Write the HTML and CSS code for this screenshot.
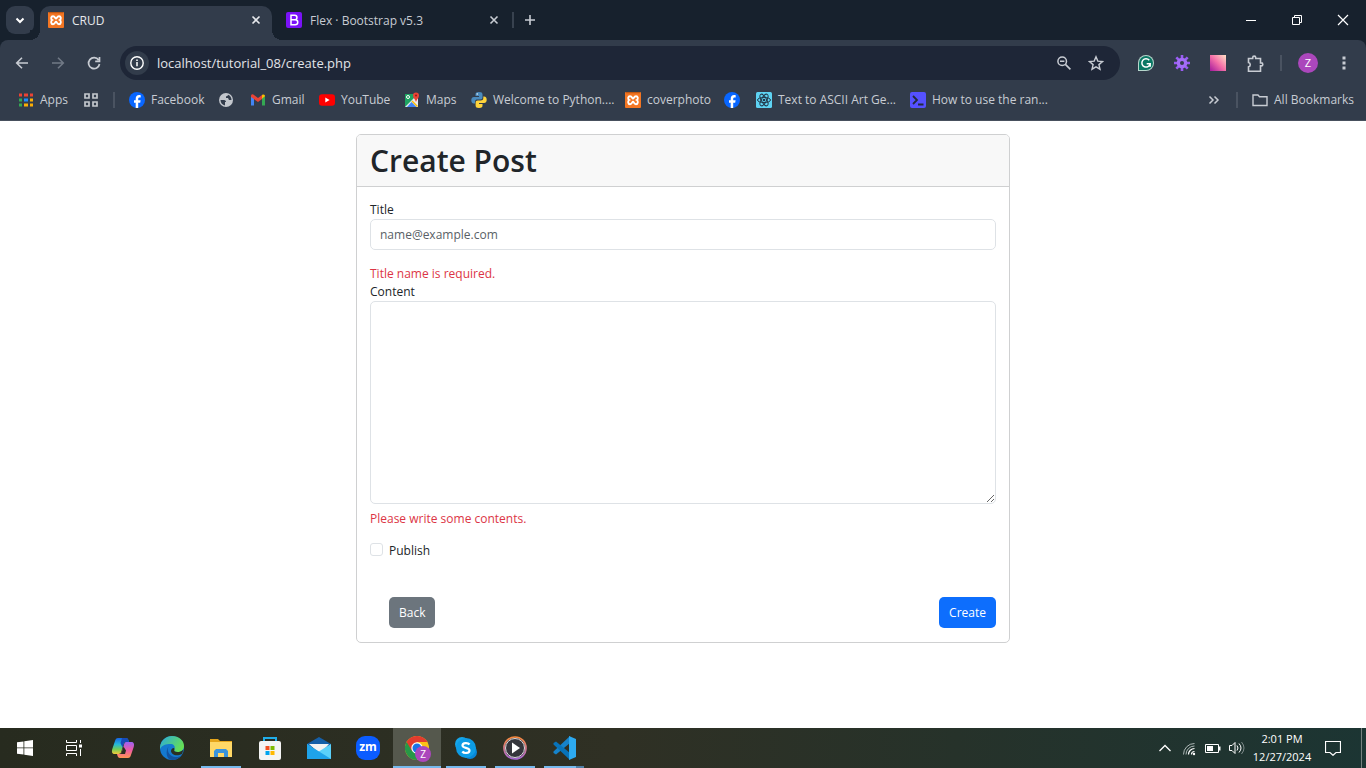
FILE: index.html
```html
<!DOCTYPE html>
<html lang="en">
<head>
<meta charset="utf-8">
<title>CRUD</title>
<link rel="stylesheet" href="styles.css">
</head>
<body>
<svg class="defs" aria-hidden="true">
  <symbol id="xampp" viewBox="0 0 16 16"><rect width="16" height="16" rx="1" fill="#f37623"/><path d="M1 .7h14" stroke="#b9530f"/><path d="M5 4.200C3 4.200 2.500 7 4.200 8 2.500 9 3 12.200 5 12.200c2.200 0 2-2.500 3-2.500s.8 2.500 3 2.500c2 0 2.500-3.200.8-4.200 1.700-1 1.200-3.800-.8-3.800-2.200 0-2 2.300-3 2.300s-.8-2.300-3-2.300z" fill="none" stroke="#fff" stroke-width="1.900"/></symbol>
  <symbol id="facebook" viewBox="0 0 16 16"><circle cx="8" cy="8" r="8" fill="#0866ff"/><path d="M6.700 16v-5.300H5V8.200h1.700V7c0-2.700 1.200-4 3.500-4 .5 0 1.100.1 1.500.2v2.200h-1.100c-1.100 0-1.400.5-1.400 1.500v1.300h2.400l-.4 2.500h-2V16z" fill="#fff"/></symbol>
  <symbol id="close" viewBox="0 0 16 16"><path d="M4.500 4.500l7 7m0-7l-7 7" stroke="currentColor" stroke-width="1.600" fill="none"/></symbol>
</svg>

<header class="browser">
  <div class="tabstrip">
    <button class="tab-search" aria-label="Search tabs"><svg width="16" height="16" viewBox="0 0 16 16"><path d="M4.500 6.500L8 10l3.500-3.500" fill="none" stroke="currentColor" stroke-width="2"/></svg></button>
    <div class="tab tab-active">
      <svg width="16" height="16"><use href="#xampp"/></svg>
      <span class="tab-title">CRUD</span>
      <button class="icon-button" aria-label="Close CRUD"><svg width="16" height="16"><use href="#close"/></svg></button>
    </div>
    <div class="tab">
      <svg width="16" height="16" viewBox="0 0 16 16"><rect width="16" height="16" rx="2" fill="#7a12f8"/><path d="M5 3.200h3.700a2.200 2.200 0 0 1 0 4.500H5zM5 7.700h4.200a2.500 2.500 0 0 1 0 5.100H5z" fill="none" stroke="#fff" stroke-width="1.500"/></svg>
      <span class="tab-title">Flex · Bootstrap v5.3</span>
      <button class="icon-button" aria-label="Close Flex"><svg width="16" height="16"><use href="#close"/></svg></button>
    </div>
    <span class="divider tab-divider"></span>
    <button class="icon-button new-tab" aria-label="New tab"><svg width="16" height="16" viewBox="0 0 16 16"><path d="M8 3v10M3 8h10" stroke="currentColor" stroke-width="1.600"/></svg></button>
    <div class="window-controls">
      <button aria-label="Minimize"><svg width="12" height="12" viewBox="0 0 12 12"><path d="M1 6.500h10" stroke="currentColor"/></svg></button>
      <button aria-label="Restore"><svg width="12" height="12" viewBox="0 0 12 12"><path d="M1.500 3.500h7v7h-7zM3.500 3.500v-2h7v7h-2" fill="none" stroke="currentColor"/></svg></button>
      <button aria-label="Close window"><svg width="12" height="12" viewBox="0 0 12 12"><path d="M1 1l10 10M11 1L1 11" stroke="currentColor" stroke-width="1.200"/></svg></button>
    </div>
  </div>

  <div class="toolbar">
    <div class="nav-buttons">
      <button class="icon-button" aria-label="Back"><svg width="16" height="16" viewBox="0 0 16 16"><path d="M14 8H3M8 2.700L2.700 8 8 13.300" fill="none" stroke="currentColor" stroke-width="1.600"/></svg></button>
      <button class="icon-button" aria-label="Forward" disabled><svg width="16" height="16" viewBox="0 0 16 16"><path d="M2 8h11M8 2.700L13.300 8 8 13.300" fill="none" stroke="currentColor" stroke-width="1.600"/></svg></button>
      <button class="icon-button" aria-label="Reload"><svg width="16" height="16" viewBox="0 0 16 16"><path d="M13.500 9A5.500 5.500 0 1 1 12.600 5M13.500 2v4.300H9.200" fill="none" stroke="currentColor" stroke-width="1.700"/></svg></button>
    </div>
    <div class="omnibox">
      <button class="site-info" aria-label="Site information"><svg width="16" height="16" viewBox="0 0 16 16"><circle cx="8" cy="8" r="6.200" fill="none" stroke="currentColor" stroke-width="1.400"/><path d="M8 7v4.300M8 4.500v1.500" stroke="currentColor" stroke-width="1.500"/></svg></button>
      <input class="address" type="text" aria-label="Address" value="localhost/tutorial_08/create.php">
      <button class="icon-button" aria-label="Zoom"><svg width="16" height="16" viewBox="0 0 16 16"><circle cx="6.200" cy="6.200" r="4.300" fill="none" stroke="currentColor" stroke-width="1.500"/><path d="M4 6.200h4.400M9.400 9.400l5 5" stroke="currentColor" stroke-width="1.600"/></svg></button>
      <button class="icon-button" aria-label="Bookmark this page"><svg width="16" height="16" viewBox="0 0 16 16"><path d="M8 1.800l1.800 4.300 4.700.4-3.600 3.100 1.100 4.600L8 11.800l-4 2.400 1.100-4.600-3.600-3.100 4.700-.4z" fill="none" stroke="currentColor" stroke-width="1.400"/></svg></button>
    </div>
    <div class="extensions">
      <button class="icon-button" aria-label="Grammarly"><svg width="16" height="16" viewBox="0 0 16 16"><path d="M0 16V8a8 8 0 1 1 8 8z" fill="#b6d6cc"/><path d="M1 15V8a7 7 0 1 1 7 7z" fill="#0a7764"/><path d="M11.300 5.200A4.200 4.200 0 1 0 12.200 8.700H8.700M12.200 8.700v3" fill="none" stroke="#fff" stroke-width="1.500"/></svg></button>
      <button class="icon-button" aria-label="Gear extension"><svg width="16" height="16" viewBox="0 0 16 16"><path d="M8 0v16M0 8h16M2.300 2.300l11.400 11.400M13.700 2.300L2.300 13.700" stroke="#9a5cf4" stroke-width="2.600"/><circle cx="8" cy="8" r="5.300" fill="#a36df7"/><circle cx="8" cy="8" r="2" fill="#323c4b"/></svg></button>
      <button class="icon-button" aria-label="Color extension"><svg width="16" height="16" viewBox="0 0 16 16"><defs><linearGradient id="pink" x1="0" y1="1" x2="1" y2="0"><stop stop-color="#a2199d"/><stop offset=".5" stop-color="#f56fa8"/><stop offset="1" stop-color="#ffe2c5"/></linearGradient></defs><rect width="16" height="16" fill="url(#pink)"/></svg></button>
      <button class="icon-button" aria-label="Extensions"><svg width="18" height="18" viewBox="0 0 18 18"><path d="M2.500 3.500h4.200V2.600a1.500 1.500 0 0 1 3 0v.9h4.800v4.400h.8a1.500 1.500 0 0 1 0 3h-.8v5.300h-12v-4.400a2.200 2.200 0 0 0 0-4.300z" fill="none" stroke="currentColor" stroke-width="1.600"/></svg></button>
      <span class="divider"></span>
      <button class="avatar" aria-label="Profile">Z</button>
      <button class="icon-button" aria-label="Menu"><svg width="16" height="16" viewBox="0 0 16 16"><path d="M6.500 1.500h3v3h-3zM6.500 6.500h3v3h-3zM6.500 11.500h3v3h-3z" fill="currentColor"/></svg></button>
    </div>
  </div>

  <nav class="bookmarks" aria-label="Bookmarks">
    <div class="bookmark-list">
      <a href="#apps"><svg width="16" height="16" viewBox="0 0 16 16"><path d="M1 3h14" stroke="#ea4335" stroke-width="3"/><path d="M1 8h4M1 13h4" stroke="#34a853" stroke-width="3"/><path d="M6 8h4" stroke="#1a8cff" stroke-width="3"/><path d="M11 8h4M6 13h9" stroke="#fbad05" stroke-width="3"/><path d="M5 1v14M11 1v14" stroke="#323c4b" stroke-width="2"/></svg>Apps</a>
      <a href="#groups" aria-label="Tab groups"><svg width="16" height="16" viewBox="0 0 16 16"><path d="M2 2h4v4H2zM10 2h4v4h-4zM2 10h4v4H2zM10 10h4v4h-4z" fill="none" stroke="#c3c7cd" stroke-width="1.700"/></svg></a>
      <span class="divider"></span>
      <a href="#facebook"><svg width="16" height="16"><use href="#facebook"/></svg>Facebook</a>
      <a href="#web" aria-label="Web page"><svg width="16" height="16" viewBox="0 0 16 16"><circle cx="8" cy="8" r="7" fill="#c3c7cd"/><path d="M2.500 8H6c1.500 0 2 1 2 2H7v3.500C4.500 13 2.500 11 2.500 8zM10 2.800C9.800 4 9 4.300 8 4.300V6h2l1 2h2.500c0-2.500-1.300-4.400-3.500-5.200z" fill="#323c4b"/></svg></a>
      <a href="#gmail"><svg width="16" height="16" viewBox="0 0 16 16"><path d="M1 13.500V4l3 2v7.500z" fill="#4285f4"/><path d="M12 13.500V6l3-2v9.500z" fill="#34a853"/><path d="M1 4.300C1 2 3 2 4 3l4 3 4-3v4L8 10 1 5z" fill="#ea4335"/><path d="M12 3c2-1.200 3 0 3 1.300l-3 2.500z" fill="#fbbc04"/></svg>Gmail</a>
      <a href="#youtube"><svg width="16" height="16" viewBox="0 0 16 16"><rect y="2.300" width="16" height="11.500" rx="3" fill="#f00"/><path d="M6.300 5.500v5l4.300-2.500z" fill="#fff"/></svg>YouTube</a>
      <a href="#maps"><svg width="16" height="16" viewBox="0 0 16 16"><rect x="1" y="2" width="13" height="13" fill="#1ea362"/><path d="M1 15L12 4l2 2v9z" fill="#e8eaed"/><path d="M3 15l4.500-5 5 5z" fill="#4285f4"/><path d="M8 9l5.500 5.500" stroke="#fbbc04" stroke-width="1.500"/><circle cx="4" cy="5" r="1.500" fill="none" stroke="#fff"/><path d="M12 10C11 7 9 6 9 3.500a3 3 0 0 1 6 0C15 6 13 7 12 10z" fill="#ea4335"/><circle cx="12" cy="3.500" r="1" fill="#8c1d18"/></svg>Maps</a>
      <a href="#python"><svg width="16" height="16" viewBox="0 0 16 16"><path d="M8 0C5 0 4.500 1 4.500 2.500V4H8v1H3C1 5 .3 6.500.3 8.300S1 11.500 3 11.500h1V9.800C4 8 5 7.500 6.500 7.500h3c1.300 0 2-.8 2-2v-3C11.500.8 10.500 0 8 0z" fill="#4b8bbe"/><path d="M8 16c3 0 3.500-1 3.500-2.500V12H8v-1h5c2 0 2.700-1.500 2.700-3.200S15 4.500 13 4.500h-.700v1.800c0 1.700-1 2.200-2.500 2.200h-3c-1.500 0-2.200.8-2.200 2v3C4.600 15.200 5.500 16 8 16z" fill="#ffd43b"/><circle cx="6.200" cy="2" r=".7" fill="#fff"/></svg>Welcome to Python....</a>
      <a href="#cover"><svg width="16" height="16"><use href="#xampp"/></svg>coverphoto</a>
      <a href="#facebook2" aria-label="Facebook"><svg width="16" height="16"><use href="#facebook"/></svg></a>
      <a href="#ascii"><svg width="16" height="16" viewBox="0 0 16 16"><rect width="16" height="16" rx="1.500" fill="#5ed3f3"/><g fill="none" stroke="#23384a"><ellipse cx="8" cy="8" rx="6.500" ry="2.600"/><ellipse cx="8" cy="8" rx="6.500" ry="2.600" transform="rotate(60 8 8)"/><ellipse cx="8" cy="8" rx="6.500" ry="2.600" transform="rotate(120 8 8)"/></g><circle cx="8" cy="8" r="1.300" fill="#23384a"/></svg>Text to ASCII Art Ge...</a>
      <a href="#random"><svg width="16" height="16" viewBox="0 0 16 16"><rect width="16" height="16" rx="2" fill="#5551ff"/><path d="M3 4l4 4-4 4M8 12.500h5.500" fill="none" stroke="#232b3c" stroke-width="1.800"/></svg>How to use the ran...</a>
    </div>
    <div class="bookmark-end">
      <button class="icon-button" aria-label="More bookmarks"><svg width="16" height="16" viewBox="0 0 16 16"><path d="M3.500 4.500L7 8l-3.500 3.500M8.500 4.500L12 8l-3.500 3.500" fill="none" stroke="currentColor" stroke-width="1.500"/></svg></button>
      <span class="divider"></span>
      <a href="#all"><svg width="16" height="16" viewBox="0 0 16 16"><path d="M1 3h5l1.500 1.700H15V13.500H1z" fill="none" stroke="currentColor" stroke-width="1.400"/></svg>All Bookmarks</a>
    </div>
  </nav>
</header>

<main class="page">
  <form class="card">
    <div class="card-header"><h1>Create Post</h1></div>
    <div class="card-body">
      <label class="form-label" for="title">Title</label>
      <input class="form-control" id="title" type="text" placeholder="name@example.com">
      <p class="error error-title">Title name is required.</p>
      <label class="form-label" for="content">Content</label>
      <textarea class="form-control" id="content" rows="10"></textarea>
      <p class="error error-content">Please write some contents.</p>
      <div class="form-check">
        <input id="publish" type="checkbox">
        <label for="publish">Publish</label>
      </div>
      <div class="actions">
        <button class="btn btn-secondary" type="button">Back</button>
        <button class="btn btn-primary" type="button">Create</button>
      </div>
    </div>
  </form>
</main>

<footer class="taskbar">
  <div class="task-list">
    <button aria-label="Start"><svg width="16" height="16" viewBox="0 0 16 16"><path d="M0 2.300l6.500-.9v6.100H0zM7.300 1.300L16 0v7.500H7.300zM0 8.300h6.500v6.300L0 13.700zM7.300 8.300H16V16l-8.700-1.300z" fill="#fff"/></svg></button>
    <button aria-label="Task view"><svg width="16" height="16" viewBox="0 0 16 16"><path d="M.5 0v2.500h10V0M.5 5.500h10v5H.5zM.5 16v-2.500h10V16M14.500 0v3M14.500 9v7" fill="none" stroke="#fff"/><path d="M13 4.500h3v3h-3z" fill="#fff"/></svg></button>
    <button aria-label="Copilot"><svg width="24" height="24" viewBox="0 0 24 24"><defs><linearGradient id="cp1" x1="0" y1="0" x2="0" y2="1"><stop stop-color="#1665e8"/><stop offset=".4" stop-color="#25b8d8"/><stop offset=".7" stop-color="#70cc57"/><stop offset="1" stop-color="#f4c83a"/></linearGradient><linearGradient id="cp2" x1="0" y1="0" x2="0" y2="1"><stop stop-color="#9b62f5"/><stop offset=".5" stop-color="#ee5aa4"/><stop offset="1" stop-color="#ff9452"/></linearGradient></defs><path d="M7 2h8c2 0 2.500 2 3 4h-3c-1.500 0-2 .6-2.500 2l-2 7c-.6 2-1 3-3 3H4c-3 0-3.500-2-2.700-5L4 5c.6-2 1.300-3 3-3z" fill="url(#cp1)"/><path d="M17 22H9c-2 0-2.500-2-3-4h2c2 0 2.600-1 3-2.500l2-7c.6-2 1-2.500 3-2.500h4c3 0 3.500 2 2.700 5L20 19c-.6 2-1.300 3-3 3z" fill="url(#cp2)"/><path d="M11 2h4c2 0 2.500 2 3 4h-3c-1.500 0-2 .6-2.500 2l-1 3.500L9.500 7z" fill="#174bb8"/><path d="M12.500 10.500l2.500 4-1 3.500H8c2 0 2.600-1 3-2.500z" fill="#2b2d21"/></svg></button>
    <button aria-label="Edge"><svg width="24" height="24" viewBox="0 0 24 24"><defs><linearGradient id="ed" x1="0" y1="0" x2="1" y2=".5"><stop stop-color="#2aa9e0"/><stop offset="1" stop-color="#66df55"/></linearGradient></defs><circle cx="12" cy="12" r="12" fill="#1479cf"/><path d="M0 11C1 4 6 0 12 0c7 0 12 4.500 12 10 0 4-3 6-6.500 6-3 0-4-1-3-3 1-3-1-5-4-5C6 8 2 9 0 13z" fill="url(#ed)"/><path d="M9 10c-3 4 0 10 6 11 3 .4 5-.6 7-2-3 4-7 5-10 5C6 24 5 14 9 10z" fill="#12539f"/><path d="M14.500 13c-1 2 0 3 3 3 2 0 4-.6 6-2.500L22 18c-6 3-11 0-11-3 0-1.500 1-3 3-3z" fill="#2b3022"/></svg></button>
    <button class="running" aria-label="File Explorer"><svg width="22" height="20" viewBox="0 0 22 20"><path d="M0 1h8l2 2h12v16H0z" fill="#e5a51b"/><path d="M0 4h22v15H0z" fill="#ffd867"/><path d="M4 19v-6l2-2h10l2 2v6h-4v-4H8v4z" fill="#3993dc"/></svg></button>
    <button aria-label="Microsoft Store"><svg width="24" height="24" viewBox="0 0 24 24"><path d="M6 7V2h12v5" fill="none" stroke="#20aee9" stroke-width="2"/><rect x="1" y="5" width="22" height="19" rx="2" fill="#f4f4f4"/><path d="M7.500 10h4v4h-4z" fill="#f25022"/><path d="M12.500 10h4v4h-4z" fill="#7fba00"/><path d="M7.500 15h4v4h-4z" fill="#00a4ef"/><path d="M12.500 15h4v4h-4z" fill="#ffb900"/></svg></button>
    <button aria-label="Mail"><svg width="24" height="24" viewBox="0 0 24 24"><path d="M0 8l12-7 12 7v3H0z" fill="#155fa8"/><path d="M2 8h20l-9 10z" fill="#f3f3f3"/><path d="M0 8l13 9-13 6z" fill="#34bdf1"/><path d="M24 8v15H0l11-7z" fill="#5bd1fa"/><path d="M0 8l24 15H0z" fill="#1fa3ea"/></svg></button>
    <button aria-label="Zoom"><span class="zoom-logo">zm</span></button>
    <button class="running current" aria-label="Chrome"><svg width="25" height="25" viewBox="0 0 25 25"><circle cx="12" cy="12" r="12" fill="#fbc116"/><path d="M1.600 6A12 12 0 0 0 12 24l5-9-5-3z" fill="#279847"/><path d="M1.600 6L7 15l5-9h10.400A12 12 0 0 0 1.600 6z" fill="#e33b2e"/><circle cx="12" cy="12" r="5.700" fill="#fff"/><circle cx="12" cy="12" r="4.500" fill="#1a73e8"/></svg><span class="task-badge">Z</span></button>
    <button class="running" aria-label="Skype"><svg width="22" height="22" viewBox="0 0 22 22"><circle cx="7" cy="7" r="7" fill="#16a6ea"/><circle cx="15" cy="15" r="7" fill="#0786d8"/><circle cx="11" cy="11" r="10" fill="#0d9ce5"/><path d="M14.500 7.500C13 5.500 7.500 5.500 7.500 8.500c0 3 7 1.700 7 5 0 3-5.500 3.200-7.200 1" fill="none" stroke="#fff" stroke-width="2.200"/></svg></button>
    <button class="running" aria-label="Media Player"><svg width="24" height="24" viewBox="0 0 24 24"><defs><linearGradient id="mp" x1="0" y1="0" x2="0" y2="1"><stop stop-color="#f98a3c"/><stop offset="1" stop-color="#a668d5"/></linearGradient></defs><circle cx="12" cy="12" r="11" fill="#34353b" stroke="url(#mp)" stroke-width="1.700"/><circle cx="12" cy="12" r="9.500" fill="none" stroke="#d8d8dc"/><path d="M9 6.500v11l8-5.500z" fill="#fff"/></svg></button>
    <button class="running stacked" aria-label="Visual Studio Code"><svg width="24" height="24" viewBox="0 0 24 24"><path d="M18 0v7L4 18.500 1.500 17v-1.500z" fill="#1683cb"/><path d="M18 24v-7L4 5.500 1.500 7v1.500z" fill="#0873ba"/><path d="M17 0l7 3v18l-7 3z" fill="#2daaf1"/></svg></button>
  </div>
  <div class="tray">
    <button aria-label="Hidden icons"><svg width="16" height="16" viewBox="0 0 16 16"><path d="M2.500 11L8 5.500l5.500 5.500" fill="none" stroke="#fff" stroke-width="1.300"/></svg></button>
    <button aria-label="Network"><svg width="16" height="16" viewBox="0 0 16 16"><path d="M10.500 14.500a3 3 0 0 1 3-3M7.500 14.500a6 6 0 0 1 6-6" fill="none" stroke="#fff" stroke-width="1.200"/><path d="M5 14.500A8.500 8.500 0 0 1 13.500 6M2.500 14.500a11 11 0 0 1 11-11" fill="none" stroke="#aeb8b7"/><circle cx="13" cy="14" r="1.200" fill="#fff"/></svg></button>
    <button aria-label="Battery"><svg width="16" height="16" viewBox="0 0 16 16"><path d="M.5 4.500h13v8H.5z" fill="none" stroke="#fff"/><path d="M2 6h6v5H2zM14 6.500h1.500v4H14z" fill="#fff"/></svg></button>
    <button aria-label="Volume"><svg width="16" height="16" viewBox="0 0 16 16"><path d="M.5 5.500h2.500l3-3v11l-3-3H.5z" fill="none" stroke="#fff"/><path d="M8 5.500q2 2.500 0 5M10 3.500q4 4.500 0 9" fill="none" stroke="#fff"/><path d="M12.500 2q5 6 0 12" fill="none" stroke="#7e8b8a"/></svg></button>
    <div class="clock"><time>2:01 PM</time><time>12/27/2024</time></div>
    <button class="notifications" aria-label="Notifications"><svg width="16" height="16" viewBox="0 0 16 16"><path d="M.5 1.500h15v11H11L8 15.300l-3-2.800H.5z" fill="none" stroke="#fff" stroke-width="1.200"/></svg></button>
    <span class="show-desktop"></span>
  </div>
</footer>
</body>
</html>
```
FILE: styles.css
```css
* { box-sizing: border-box; }

body {
  margin: 0;
  min-height: 100vh;
  display: flex;
  flex-direction: column;
  background: #fff;
  color: #212529;
  font-family: "Open Sans", "Noto Sans", sans-serif;
  font-size: 12px;
}

button, input, textarea { font: inherit; color: inherit; }
button { border: 0; padding: 0; background: none; }
a { color: inherit; text-decoration: none; }
svg { display: block; flex: none; }
.defs { position: absolute; width: 0; height: 0; }

/* Browser frame */
.browser { background: #17212d; color: #c8ccd3; font-size: 12px; }
.icon-button { display: grid; place-items: center; width: 16px; height: 16px; }
.divider { width: 2px; height: 16px; background: #4a5361; }

.tabstrip { display: flex; align-items: center; height: 40px; padding: 6px 0 0 6px; }
.tab-search {
  display: grid;
  place-items: center;
  width: 28px;
  height: 28px;
  margin: 0 6px 6px 0;
  border-radius: 9px;
  background: #323c4b;
  color: #fff;
}
.tab {
  display: flex;
  align-items: center;
  gap: 8px;
  width: 238px;
  height: 34px;
  padding: 0 8px 6px 14px;
}
.tab-active {
  position: relative;
  width: 232px;
  padding: 0 8px 6px;
  border-radius: 10px 10px 0 0;
  background: #323c4b;
  color: #e6e8ec;
}
.tab-active::before, .tab-active::after {
  content: "";
  position: absolute;
  bottom: 0;
  width: 10px;
  height: 10px;
}
.tab-active::before { right: 100%; background: radial-gradient(circle at 0 0, #17212d 10px, #323c4b 10px); }
.tab-active::after { left: 100%; background: radial-gradient(circle at 100% 0, #17212d 10px, #323c4b 10px); }
.tab-title { flex: 1; white-space: nowrap; }
.tab-divider { margin: 0 8px 6px 2px; background: #38424f; }
.new-tab { margin-bottom: 6px; }
.window-controls { display: flex; margin: 0 0 6px auto; color: #fff; }
.window-controls button { display: grid; place-items: center; width: 46px; height: 28px; }

.toolbar {
  display: flex;
  align-items: center;
  height: 46px;
  padding: 0 14px;
  border-radius: 8px 8px 0 0;
  background: #323c4b;
}
.nav-buttons { display: flex; gap: 20px; width: 106px; }
.nav-buttons button:disabled { color: #717986; }
.omnibox {
  flex: 1;
  display: flex;
  align-items: center;
  gap: 16px;
  height: 34px;
  padding: 0 16px 0 5px;
  border-radius: 17px;
  background: #1e2637;
}
.site-info {
  display: grid;
  place-items: center;
  width: 24px;
  height: 24px;
  margin-right: -8px;
  border-radius: 50%;
  background: #323c4b;
  color: #fff;
}
.address {
  flex: 1;
  min-width: 0;
  padding: 0;
  border: 0;
  outline: 0;
  background: none;
  color: #e2e4e9;
  font-size: 13px;
}
.extensions { display: flex; align-items: center; gap: 20px; padding-left: 18px; }
.extensions .divider { margin: 0 -4px 0 -2px; }
.avatar {
  width: 20px;
  height: 20px;
  margin-right: -2px;
  border-radius: 50%;
  background: #ab47bc;
  color: #fff;
  font-size: 11px;
  line-height: 20px;
}

.bookmarks {
  display: flex;
  justify-content: space-between;
  align-items: center;
  height: 35px;
  padding: 0 12px 7px 18px;
  border-bottom: 1px solid #47505d;
  background: #323c4b;
}
.bookmark-list {
  display: grid;
  grid-template-columns: 65px 30px 16px 89px 32px 69px 85px 67px 154px 99px 32px 154px 140px;
  align-items: center;
}
.bookmarks a { display: flex; align-items: center; gap: 6px; white-space: nowrap; }
.bookmark-end { display: flex; align-items: center; gap: 14px; }

/* Page */
.page { flex: 1; padding: 13px; font-size: 12px; line-height: 19px; }
.card {
  max-width: 654px;
  margin: 0 auto;
  border: 1px solid #cfd0d1;
  border-radius: 5px;
  overflow: hidden;
}
.card-header { padding: 6px 13px; border-bottom: 1px solid #cfd0d1; background: #f8f8f8; }
.card-header h1 { margin: 0; font-size: 30px; font-weight: 600; line-height: 39px; }
.card-body { padding: 14px 13px; }
.form-label { display: block; line-height: 18px; }
.form-control {
  display: block;
  width: 100%;
  padding: 5px 9px;
  border: 1px solid #dee2e6;
  border-radius: 5px;
  background: #fff;
}
input.form-control { height: 31px; }
textarea.form-control { height: 203px; resize: vertical; }
.form-control::placeholder { color: #595f66; opacity: 1; }
.error { margin: 0; color: #dc3545; }
.error-title { margin-top: 14px; }
.error-content { margin-top: 5px; }
.form-check { display: flex; align-items: flex-start; gap: 6px; margin-top: 13px; }
.form-check input {
  appearance: none;
  width: 13px;
  height: 13px;
  margin: 2px 0 0;
  border: 1px solid #dee2e6;
  border-radius: 3px;
}
.actions { display: flex; justify-content: space-between; margin-top: 37px; padding-left: 19px; }
.btn { height: 31px; padding: 0 10px; border-radius: 5px; color: #fff; }
.btn-secondary { background: #6c757d; }
.btn-primary { background: #0d6efd; }

/* Taskbar */
.taskbar {
  display: flex;
  justify-content: space-between;
  height: 40px;
  background: linear-gradient(90deg, #272b1f, #2f3024 45%, #26322a 70%, #1c3533);
  color: #fff;
}
.task-list { display: flex; gap: 1px; padding-left: 1px; }
.task-list button { position: relative; display: grid; place-items: center; width: 48px; height: 40px; }
.running::after {
  content: "";
  position: absolute;
  left: 4px;
  right: 4px;
  bottom: 0;
  height: 2px;
  background: #76b9ed;
}
.current { background: #55584d; }
.current::after { left: 0; right: 0; }
.stacked::after { background: linear-gradient(90deg, #76b9ed 80%, #507fa5 80%); }
.zoom-logo {
  width: 24px;
  height: 24px;
  border-radius: 9px;
  background: #0b5cff;
  font-size: 12px;
  font-weight: 700;
  line-height: 22px;
}
.task-badge {
  position: absolute;
  left: 22px;
  top: 18px;
  width: 16px;
  height: 16px;
  border-radius: 50%;
  background: #ab47bc;
  font-size: 10px;
  line-height: 16px;
}
.tray { display: flex; align-items: center; gap: 8px; }
.clock {
  display: flex;
  flex-direction: column;
  align-items: center;
  width: 58px;
  font-size: 11px;
  line-height: 18px;
}
.notifications { margin: 0 12px 0 6px; }
.show-desktop { width: 5px; height: 40px; border-left: 1px solid #75817f; }
```
